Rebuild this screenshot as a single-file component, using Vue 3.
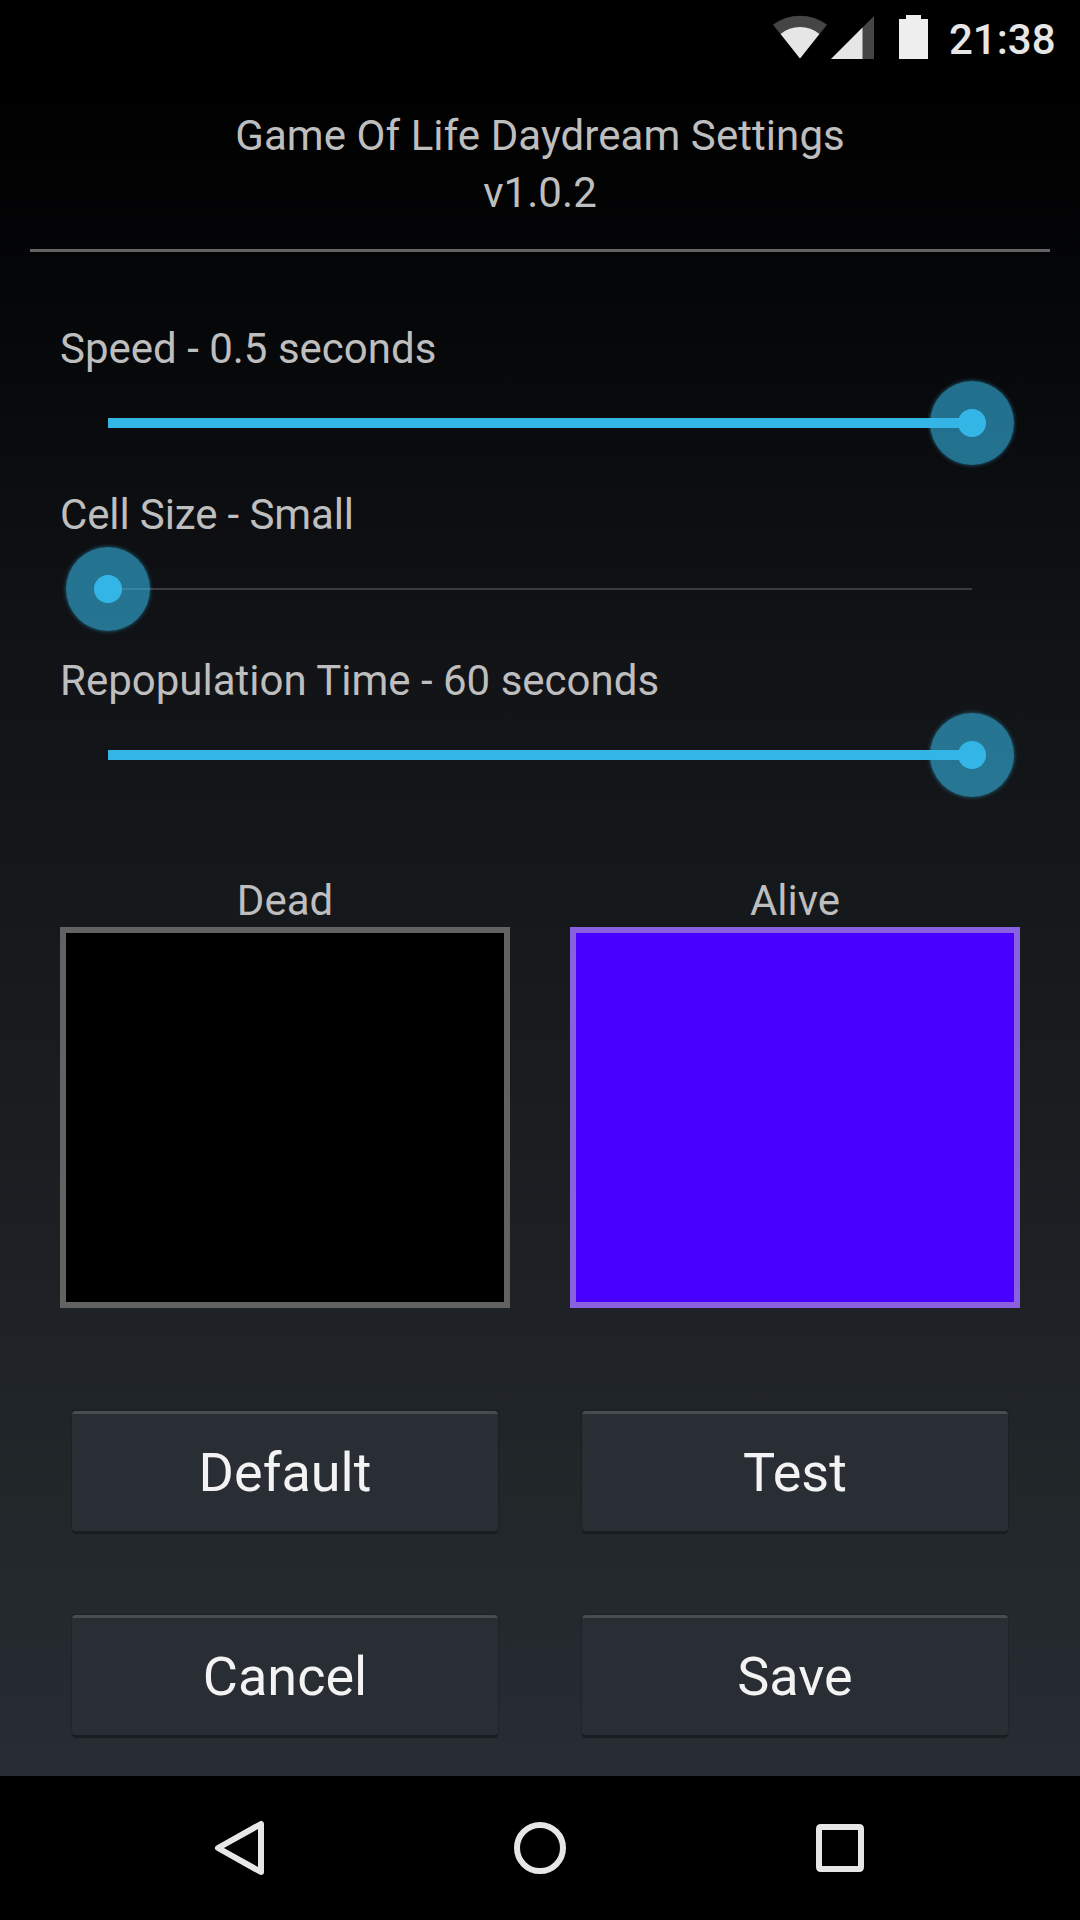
<script setup>
import { ref } from 'vue'

const sliders = ref([
  { id: 'speed', name: 'Speed', value: '0.5 seconds', percent: 100 },
  { id: 'cell', name: 'Cell Size', value: 'Small', percent: 0 },
  { id: 'repopulation', name: 'Repopulation Time', value: '60 seconds', percent: 100 },
])
const swatches = ['Dead', 'Alive']
const actions = ['Default', 'Test', 'Cancel', 'Save']
</script>

<template>
  <div class="screen">
    <div class="app">
      <div class="status">
        <svg class="wifi" width="54" height="44" viewBox="0 0 54 44">
          <path d="M27 43.5 0 9.8Q12 .8 27 .8T54 9.8Z" fill="#454545" />
          <path d="M27 43.5 7.6 19Q16 12 27 12T46.4 19Z" fill="#e6e6e6" />
        </svg>
        <svg class="signal" width="43" height="43" viewBox="0 0 43 43">
          <path d="M0 43 43 0V43Z" fill="#454545" />
          <path d="M0 43 31.5 11.5V43Z" fill="#e6e6e6" />
        </svg>
        <svg class="battery" width="29" height="44" viewBox="0 0 29 44">
          <path d="M7 0H22V4H29V44H0V4H7Z" fill="#eee" />
        </svg>
        <span class="clock">21:38</span>
      </div>

      <header class="title">Game Of Life Daydream Settings<br />v1.0.2</header>

      <main class="settings">
        <section v-for="s in sliders" :key="s.id" class="setting" :class="s.id">
          <label>{{ s.name }} - {{ s.value }}</label>
          <div class="slider">
            <div class="track"></div>
            <div class="fill" :style="{ width: s.percent + '%' }"></div>
            <div class="thumb" :style="{ left: s.percent + '%' }"></div>
          </div>
        </section>
      </main>

      <div class="swatches">
        <div v-for="s in swatches" :key="s" class="swatch">
          <span>{{ s }}</span>
          <div class="color" :class="s.toLowerCase()"></div>
        </div>
      </div>

      <div class="actions">
        <button v-for="a in actions" :key="a">{{ a }}</button>
      </div>
    </div>

    <nav class="nav">
      <svg width="52" height="60" viewBox="0 0 52 60">
        <path d="M6 30 49 6V54Z" fill="none" stroke="#e6e6e6" stroke-width="6" stroke-linejoin="round" />
      </svg>
      <svg width="52" height="52" viewBox="0 0 52 52">
        <circle cx="26" cy="26" r="23" fill="none" stroke="#e6e6e6" stroke-width="6" />
      </svg>
      <svg width="48" height="48" viewBox="0 0 48 48">
        <path fill="#e6e6e6" fill-rule="evenodd" d="M5 0H43Q48 0 48 5V43Q48 48 43 48H5Q0 48 0 43V5Q0 0 5 0ZM6 6V42H42V6Z" />
      </svg>
    </nav>
  </div>
</template>

<style>
body {
  margin: 0;
  background: #000;
}
</style>

<style scoped>
.screen {
  display: flex;
  flex-direction: column;
  width: 1080px;
  height: 1920px;
  background: #000;
  color: #bebebe;
  font: 400 42px/49px Roboto, sans-serif;
}
.app {
  display: flex;
  flex-direction: column;
  height: 1776px;
  background: linear-gradient(#000 0, #000 80px, #050608 300px, #111316 650px, #15191b 920px, #1f2327 1350px, #22272a 1500px, #282c34 1776px);
}
.status {
  display: flex;
  height: 75px;
  box-sizing: border-box;
  padding: 15px 0 0 773px;
}
.signal {
  margin: 1px 0 0 4px;
}
.battery {
  margin-left: 25px;
}
.clock {
  margin-left: 21px;
  font-weight: 500;
  color: #e6e6e6;
}
.title {
  box-sizing: border-box;
  height: 177px;
  margin: 0 30px;
  padding-top: 32px;
  border-bottom: 3px solid #646464;
  line-height: 57px;
  letter-spacing: 0.07px;
  text-align: center;
}
.settings {
  margin: 72px 60px 0;
}
.setting {
  height: 166px;
}
.setting label {
  display: block;
  height: 49px;
}
.cell label {
  letter-spacing: -0.12px;
}
.slider {
  position: relative;
  height: 100px;
  margin: 0 48px;
}
.track {
  position: absolute;
  top: 49px;
  width: 100%;
  height: 2px;
  background: #3a3b3c;
}
.fill {
  position: absolute;
  top: 45px;
  height: 10px;
  background: #33b5e5;
}
.thumb {
  position: absolute;
  top: 8px;
  width: 84px;
  height: 84px;
  margin-left: -42px;
  border-radius: 50%;
  background: radial-gradient(circle, #33b5e5 13.5px, rgba(51, 181, 229, 0.6) 14.5px);
  box-shadow: 0 0 4px rgba(51, 181, 229, 0.55);
}
.swatches {
  display: flex;
  gap: 60px;
  margin: 54px 60px 0;
}
.swatch {
  width: 450px;
  text-align: center;
}
.swatch span {
  display: block;
  height: 51px;
}
.color {
  box-sizing: border-box;
  height: 381px;
  border: 6px solid;
}
.dead {
  background: #000;
  border-color: #626262;
}
.alive {
  background: #4800ff;
  border-color: #8860e0;
}
.actions {
  display: grid;
  grid-template-columns: 426px 426px;
  grid-auto-rows: 120px;
  gap: 84px;
  margin: 103px 72px 0;
}
button {
  margin: 0;
  padding: 3px 0 0;
  border: 0;
  border-radius: 4px;
  background: linear-gradient(#484c4f 3px, #292d34 3px);
  box-shadow: 0 3px 0 #1a1d20, 0 0 2px rgba(0, 0, 0, 0.5);
  color: #f3f3f3;
  font: 400 54px/63px Roboto, sans-serif;
}
.nav {
  display: flex;
  align-items: center;
  justify-content: space-between;
  height: 144px;
  padding: 0 216px 0 212px;
}
</style>
